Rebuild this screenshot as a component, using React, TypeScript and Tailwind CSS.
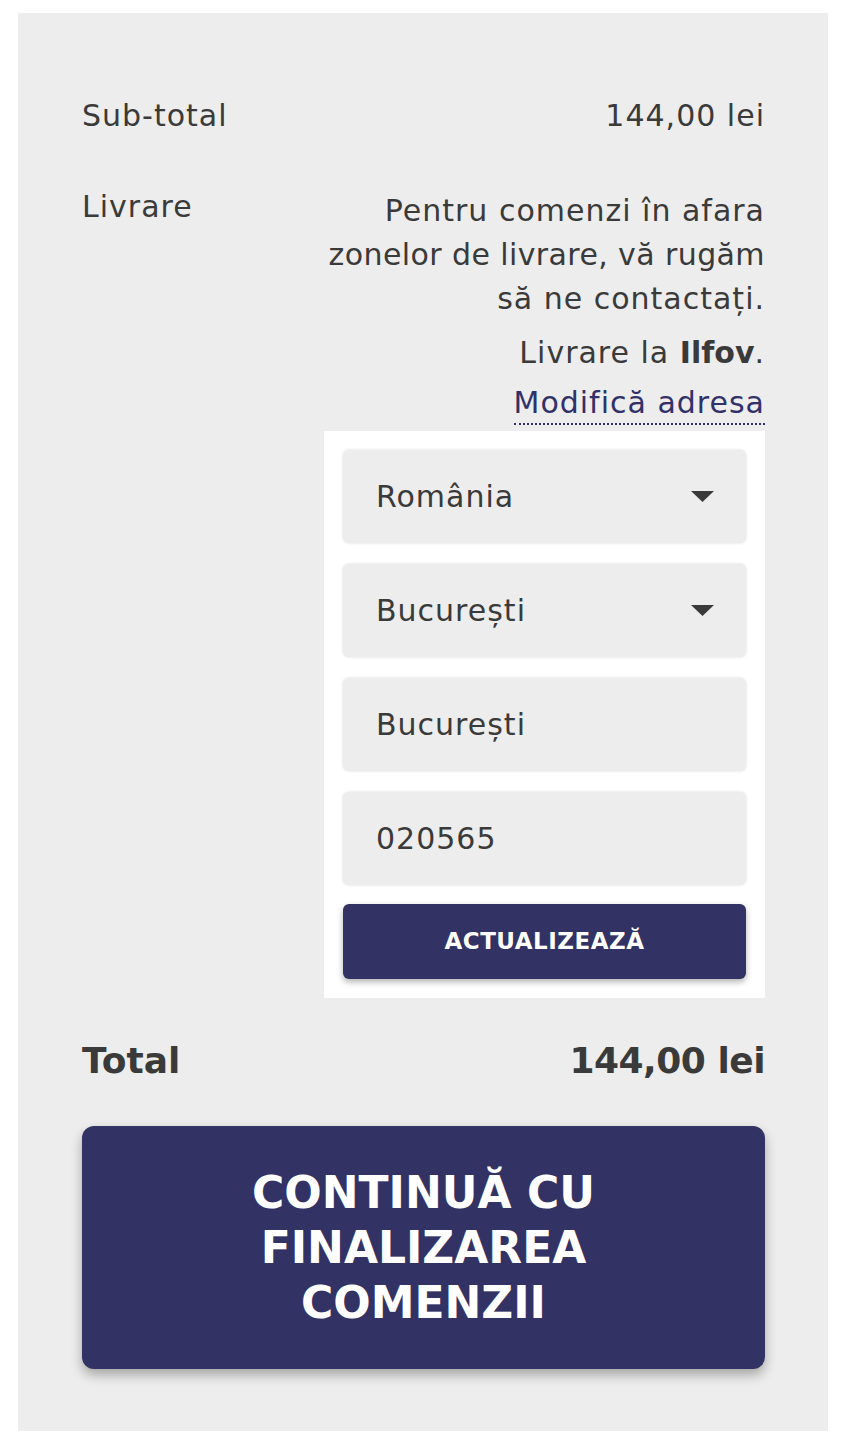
import React from "react"

const font = { fontFamily: '"DejaVu Sans", "Open Sans", sans-serif' }

function SelectBox({ value }: { value: string }) {
    return (
        <div className="h-[93px] rounded-md bg-[#ededed] shadow-[0_0_3px_rgba(0,0,0,0.15)] flex items-center justify-between pl-[33px] pr-[32px]">
            <span className="text-[30px] tracking-[1px] text-[#3a3a3a]">{value}</span>
            <svg width="23" height="11" viewBox="0 0 23 11">
                <path d="M0 0 H23 L11.5 11 Z" fill="#3a3a3a" />
            </svg>
        </div>
    )
}

function InputBox({ value }: { value: string }) {
    return (
        <div className="h-[93px] rounded-md bg-[#ededed] shadow-[0_0_3px_rgba(0,0,0,0.15)] flex items-center pl-[33px]">
            <span className="text-[30px] tracking-[1px] text-[#3a3a3a]">{value}</span>
        </div>
    )
}

export default function App() {
    return (
        <div className="bg-white min-h-screen pt-[13px] pl-[18px] pr-[14px] pb-[12px]" style={font}>
            <div className="bg-[#ededed] pt-[83px] pb-[62px] pl-[64px] pr-[63px] text-[#3a3a3a]">
                <div className="flex justify-between text-[30px] tracking-[1px] leading-[40px]">
                    <span>Sub-total</span>
                    <span>144,00 lei</span>
                </div>

                <div className="flex justify-between mt-[53px]">
                    <span className="text-[30px] tracking-[1px] leading-[36px]">Livrare</span>
                    <div className="w-[441px] flex flex-col items-end text-right text-[30px] tracking-[1px]">
                        <p className="leading-[44px] whitespace-nowrap">
                            Pentru comenzi în afara<br />
                            <span className="tracking-[0.4px]">zonelor de livrare, vă rugăm</span><br />
                            să ne contactați.
                        </p>
                        <p className="leading-[44px] mt-[10px]">
                            Livrare la <b className="font-bold tracking-normal">Ilfov</b>.
                        </p>
                        <a className="leading-[40px] mt-[8px] text-[#31316a] border-b-2 border-dotted border-[#31316a]">
                            Modifică adresa
                        </a>
                        <div className="w-full bg-white mt-[6px] p-[19px] flex flex-col gap-[21px] tracking-normal">
                            <SelectBox value="România" />
                            <SelectBox value="București" />
                            <InputBox value="București" />
                            <InputBox value="020565" />
                            <div className="h-[75px] -mt-[2px] rounded-md bg-[#323264] shadow-[0_3px_6px_rgba(0,0,0,0.3)] flex items-center justify-center text-white font-bold text-[23px] tracking-[0.5px]">
                                ACTUALIZEAZĂ
                            </div>
                        </div>
                    </div>
                </div>

                <div className="flex justify-between mt-[40px] text-[36px] leading-[46px] font-bold">
                    <span>Total</span>
                    <span className="tracking-[-0.5px]">144,00 lei</span>
                </div>

                <div className="mt-[42px] rounded-xl bg-[#323264] shadow-[0_6px_12px_rgba(0,0,0,0.3)] py-[39px] px-[40px] text-center text-white font-bold text-[44px] leading-[55px]">
                    CONTINUĂ CU<br />FINALIZAREA<br />COMENZII
                </div>
            </div>
        </div>
    )
}
